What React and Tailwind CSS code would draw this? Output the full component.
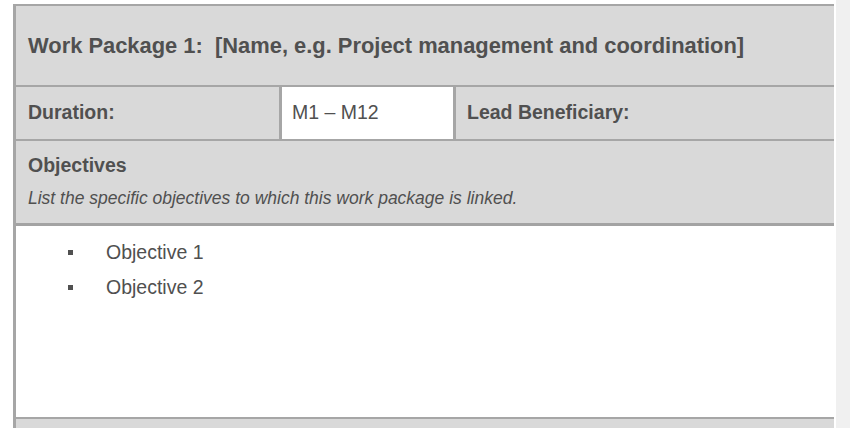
export default function App() {
  const objectives = ['Objective 1', 'Objective 2'];

  return (
    <div className="flex h-[428px] w-[850px] overflow-hidden bg-white font-['Liberation_Sans',Arial,sans-serif] text-[#505050]">
      {/* Work package table */}
      <div className="pl-[13px] pt-[4px]">
        <div className="flex w-[821px] flex-col border-l-[3px] border-t-[2px] border-[#a6a6a6]">
          {/* Title */}
          <div className="flex h-[81px] items-center border-b-[2px] border-[#a6a6a6] bg-[#d9d9d9] pl-[12px]">
            <span className="text-[21.9px] font-bold leading-none">
              Work Package 1:&nbsp; [Name, e.g. Project management and coordination]
            </span>
          </div>

          {/* Duration row */}
          <div className="flex h-[54px] border-b-[2px] border-[#a6a6a6] bg-[#d9d9d9]">
            <div className="flex w-[266px] items-center border-r-[3px] border-[#a6a6a6] pl-[12px] text-[19.5px] font-bold">
              Duration:
            </div>
            <div className="flex w-[174px] items-center border-r-[3px] border-[#a6a6a6] bg-white pl-[10px] text-[19.5px]">
              M1 – M12
            </div>
            <div className="flex flex-1 items-center pl-[11px] text-[19.5px] font-bold">
              Lead Beneficiary:
            </div>
          </div>

          {/* Objectives header */}
          <div className="h-[85px] border-b-[3px] border-[#a3a3a3] bg-[#d9d9d9] pl-[12px] pt-[12px]">
            <div className="text-[19.5px] font-bold leading-[24px]">Objectives</div>
            <div className="mt-[11px] text-[17.5px] italic leading-[20px]">
              List the specific objectives to which this work package is linked.
            </div>
          </div>

          {/* Objectives list */}
          <div className="h-[193px] border-b-[2px] border-[#a6a6a6] bg-white pt-[9px]">
            {objectives.map((o) => (
              <div key={o} className="flex items-center text-[19.5px] leading-[35px]">
                <span className="ml-[52px] h-[5px] w-[5px] shrink-0 bg-[#505050]" />
                <span className="ml-[33px]">{o}</span>
              </div>
            ))}
          </div>

          {/* Next row (cut off) */}
          <div className="h-[20px] bg-[#d9d9d9]" />
        </div>
      </div>

      {/* Scroll track */}
      <div className="ml-[2px] h-full w-[14px] bg-[#f0f0f0]" />
    </div>
  );
}
